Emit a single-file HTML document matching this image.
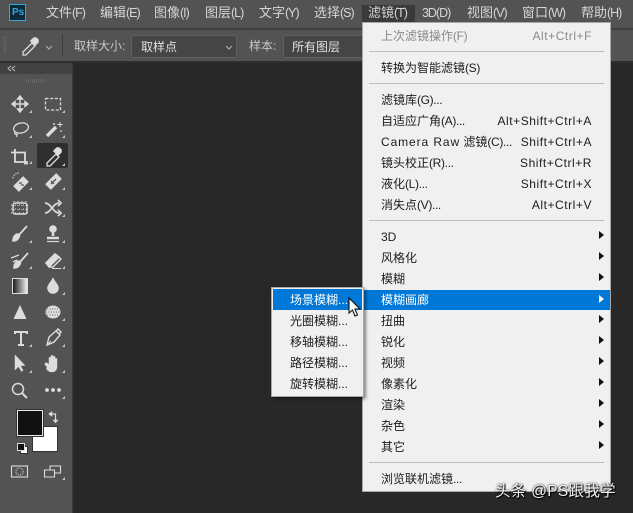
<!DOCTYPE html>
<html><head><meta charset="utf-8"><style>
html,body{margin:0;padding:0;width:633px;height:513px;overflow:hidden;background:#282828}
body{position:relative;font-family:"Liberation Sans","Noto Sans CJK SC",sans-serif;}
div,span{position:absolute;box-sizing:border-box}
u{text-decoration:none;letter-spacing:-.35px}
.m u{letter-spacing:-1px;font-size:.96em}
.sub u{letter-spacing:0}
.t{white-space:nowrap;line-height:16px;height:16px}
.m{color:#d6d6d6;font-size:13px;top:5px}
.i{color:#1c1c1c;font-size:12px;left:381px}
.s{color:#1c1c1c;font-size:12px;right:41px;letter-spacing:.55px}
.sub{color:#1c1c1c;font-size:12px;left:290px}
.sep{left:369px;width:235px;height:1px;background:#bdbdbd}
.arr{left:599px;width:0;height:0;border-left:5px solid #111;border-top:4.5px solid transparent;border-bottom:4.5px solid transparent}
svg{position:absolute;left:0;top:0}
</style></head><body>
<div style="left:0;top:0;width:633px;height:28px;background:#535353"></div>
<div style="left:0;top:28px;width:633px;height:2px;background:#3f3f3f"></div>
<div style="left:0;top:30px;width:633px;height:32px;background:#535353"></div>
<div style="left:0;top:61px;width:633px;height:2px;background:#2e2e2e"></div>
<div style="left:0;top:63px;width:72px;height:450px;background:#535353"></div>
<div style="left:0;top:63px;width:72px;height:11px;background:#424242"></div>
<div style="left:72px;top:63px;width:1px;height:450px;background:#3a3a3a"></div>
<div style="left:9px;top:4px;width:17px;height:17px;background:#0d2a3c;border:1.5px solid #31a8d8"></div>
<div class="t" style="left:12px;top:5px;font-size:10px;font-weight:bold;color:#31a8d8">Ps</div>
<div class="t m" style="left:46px">文件<u>(F)</u></div>
<div class="t m" style="left:100px">编辑<u>(E)</u></div>
<div class="t m" style="left:154px">图像<u>(I)</u></div>
<div class="t m" style="left:205px">图层<u>(L)</u></div>
<div class="t m" style="left:259px">文字<u>(Y)</u></div>
<div class="t m" style="left:314px">选择<u>(S)</u></div>
<div style="left:362px;top:5px;width:53px;height:17px;background:#3a3a3a"></div>
<div class="t m" style="left:368px">滤镜<u>(T)</u></div>
<div class="t m" style="left:422px"><u>3D(D)</u></div>
<div class="t m" style="left:467px">视图<u>(V)</u></div>
<div class="t m" style="left:522px">窗口<u>(W)</u></div>
<div class="t m" style="left:581px">帮助<u>(H)</u></div>
<div style="left:62px;top:34px;width:1px;height:22px;background:#3d3d3d"></div>
<div class="t" style="left:74px;top:38px;font-size:12px;color:#c8c8c8">取样大小:</div>
<div style="left:131px;top:35px;width:106px;height:23px;background:#454545;border:1px solid #5f5f5f;border-radius:3px"></div>
<div class="t" style="left:141px;top:39px;font-size:12px;color:#e0e0e0">取样点</div>
<div class="t" style="left:249px;top:38px;font-size:12px;color:#c8c8c8">样本:</div>
<div style="left:283px;top:35px;width:85px;height:23px;background:#454545;border:1px solid #5f5f5f;border-radius:3px"></div>
<div class="t" style="left:292px;top:39px;font-size:12px;color:#e0e0e0">所有图层</div>
<div style="left:37px;top:143px;width:31px;height:25px;background:#2f2f2f;border-radius:2px"></div>
<svg width="633" height="513" fill="none" stroke="#dcdcdc" stroke-width="1.6">
<!-- grips & option bar -->
<path d="M4 36v18M6 36v18" stroke="#666" stroke-dasharray="1 1"/>
<path d="M26 80h20M26 82h20" stroke="#6d6d6d" stroke-dasharray="1 1"/>
<path d="M11 66l-3 2.500 3 2.500M15 66l-3 2.500 3 2.500" stroke="#bbb" stroke-width="1"/>
<path d="M46 45l3 3 3-3M226 45l3 3 3-3" stroke="#aaa" stroke-width="1.2" transform="translate(0,1)"/>
<!-- options eyedropper -->
<path d="M23 52l9-9 3 3-9 9h-3z" stroke="#ddd" stroke-width="1.300"/><path d="M31 41l3-3 2 0 2 2 0 2-3 3z" fill="#ddd"/>
<!-- move -->
<path d="M20 97v14M13 104h14M20 96l-2.500 3h5zM20 112l-2.500-3h5zM12 104l3-2.500v5zM28 104l-3-2.500v5z" fill="#dcdcdc" stroke-width="1.4"/>
<!-- marquee -->
<rect x="45.500" y="98.500" width="15" height="11.500" stroke-dasharray="3 1.700" stroke-width="1.300"/>
<!-- lasso -->
<ellipse cx="21" cy="128" rx="7.500" ry="5" transform="rotate(-12 21 128)" stroke-width="1.300"/><path d="M15 132c-1 2 1 3 2 2s-1 2 0 3" stroke-width="1.200"/>
<!-- wand -->
<path d="M47 136l9-9" stroke-width="3.400"/><path d="M60 122v5M57.500 124.500h5M54 123v2M53 124h2M61 130v2" stroke-width="1"/>
<!-- crop -->
<path d="M15 149v13h12v2.500M11 152.500h14v12" stroke-width="1.800"/>
<!-- eyedropper -->
<path d="M47 163l9-9 3 3-9 9h-3z" stroke="#e0e0e0" stroke-width="1.300"/><path d="M54 151l3-3h2l2 2v2l-3 3z" fill="#e0e0e0"/>
<!-- heal -->
<path d="M16 189l10-10" stroke-width="8"/><path d="M13 178a6 6 0 0 1 7-5" stroke-dasharray="1.200 1.200" stroke-width="1.200"/><path d="M19 183h3M21 185h3" stroke="#555" stroke-width="1.200"/>
<!-- bandage -->
<path d="M48 187l11-11" stroke-width="8"/><path d="M51 184l5-5M54 184l-3-3" stroke="#555" stroke-width="1.400"/>
<!-- patch -->
<rect x="13" y="203" width="14" height="11" rx="2" stroke-width="1.400"/><path d="M14 201v15M18 201v15M22 201v15M26 201v15M11 205h18M11 209h18M11 213h18" stroke-dasharray="1 3" stroke-width="1"/>
<!-- content move -->
<path d="M45 203c6 0 8 10 14 10M45 213c6 0 8-10 14-10M58 200l3 3-3 3M58 210l3 3-3 3" stroke-width="1.700"/>
<!-- brush -->
<path d="M27 226l-8 9" stroke-width="1.800"/><path d="M13 241c0-4 2-6 4-7 2 0 3 2 2 3-1 3-3 4-6 4z" fill="#dcdcdc"/>
<!-- stamp -->
<circle cx="53" cy="229" r="3" fill="#dcdcdc"/><path d="M53 231v5M47 238h12" stroke-width="2.600"/><path d="M47 241.500h12" stroke-width="1.200"/>
<!-- history brush -->
<path d="M28 253l-8 9" stroke-width="1.800"/><path d="M14 268c0-4 2-6 4-7 2 0 3 2 2 3-1 3-3 4-6 4z" fill="#dcdcdc"/><path d="M11 258l8-3M13 262l4-2" stroke-width="1.400"/>
<!-- eraser -->
<path d="M46 263l9-9 6 5-8 8h-4z" stroke-width="1.400"/><path d="M46 263l9-9 4 3-9 9z" fill="#dcdcdc"/><path d="M52 268.500h9" stroke-width="1"/>
<!-- smudge drop -->
<path d="M53 279c-2 4-5 6-5 9a5 5 0 0 0 10 0c0-3-3-5-5-9z" fill="#dcdcdc"/>
<!-- triangle -->
<path d="M20 305l6.500 14h-13z" fill="#dcdcdc" stroke-width="0"/>
<!-- sponge -->
<ellipse cx="53" cy="312" rx="7.500" ry="6.500" fill="#dcdcdc" stroke="none"/><path d="M47 309h12M46 312h14M47 315h12" stroke="#666" stroke-dasharray="1 1.500" stroke-width="1"/>
<!-- T -->
<path d="M15 334v-2h12v2M21 332v13M18 345h6" stroke-width="2"/>
<!-- pen -->
<path d="M47 345l2-8 7-6 4 4-6 7z" stroke-width="1.400"/><path d="M47 345l4-4" stroke-width="1"/><path d="M56 331l2-2 3 3-2 2" stroke-width="1.500"/>
<!-- arrow -->
<path d="M15 355v15l3.500-3.500 3 5 1.500-1-2.500-5h4.500z" fill="#dcdcdc" stroke-width="0.500"/>
<!-- hand -->
<path d="M47 367c-2-2-3-3-1.500-4s3 1 3.500 1.500V358c0-1 2-1 2 0v4-6c0-1 2-1 2 0v6-5c0-1 2-1 2 0v5-3c0-1 2-1 2 0v7c0 3-1 6-5 6-3 0-5-2-5.500-3z" fill="#dcdcdc" stroke-width="0.500"/>
<!-- zoom -->
<circle cx="18" cy="389" r="5.500" stroke-width="1.500"/><path d="M22 393l5 5" stroke-width="2"/>
<!-- dots -->
<path d="M47 390h.01M53 390h.01M59 390h.01" stroke-width="3.800" stroke-linecap="round"/>
<!-- swap -->
<path d="M50 414h5.500v7" stroke-width="1.200"/><path d="M52 411.500l-3.500 2.500 3.500 2.500zM53 420h5l-2.500 3z" fill="#dcdcdc" stroke-width="0.500"/>
<!-- mask -->
<rect x="11.500" y="466" width="16" height="11" stroke-width="1.100"/><circle cx="19.500" cy="471.500" r="3.600" stroke-width="1" stroke-dasharray="1 1"/>
<!-- screen -->
<path d="M44.500 470h10v7h-10zM50 470v-4h10.500v7H55" stroke-width="1.100"/>
<!-- corner triangles -->
<path d="M32 113v-3l-3 3zM65 113v-3l-3 3zM32 138v-3l-3 3zM65 138v-3l-3 3zM32 164v-3l-3 3zM65 166v-3l-3 3zM32 190v-3l-3 3zM65 190v-3l-3 3zM65 217v-3l-3 3zM32 243v-3l-3 3zM65 243v-3l-3 3zM32 269v-3l-3 3zM65 269v-3l-3 3zM65 295v-3l-3 3zM65 321v-3l-3 3zM32 347v-3l-3 3zM65 347v-3l-3 3zM32 373v-3l-3 3zM65 373v-3l-3 3zM65 399v-3l-3 3zM65 480v-3l-3 3z" fill="#c4c4c4" stroke="none"/>
</svg>
<!-- gradient swatch -->
<div style="left:12px;top:278px;width:16px;height:16px;background:linear-gradient(90deg,#1c1c1c,#eee);border:1px solid #ddd"></div>
<!-- colours -->
<div style="left:32px;top:426px;width:26px;height:26px;background:#fff;border:1px solid #333"></div>
<div style="left:17px;top:410px;width:26px;height:26px;background:#111;border:1px solid #e8e8e8;outline:1px solid #333"></div>
<div style="left:20px;top:446px;width:8px;height:8px;background:#fff;border:1px solid #333"></div>
<div style="left:17px;top:443px;width:8px;height:8px;background:#111;border:1px solid #ddd"></div>
<!-- main menu -->
<div style="left:362px;top:22px;width:249px;height:470px;background:#f0f0f0;border:1px solid #a8a8a8"></div>
<div class="t i" style="top:28px;color:#8a8a8a">上次滤镜操作<u>(F)</u></div>
<div class="t s" style="top:28px;color:#8a8a8a">Alt+Ctrl+F</div>
<div class="sep" style="top:51px"></div>
<div class="t i" style="top:60px">转换为智能滤镜<u>(S)</u></div>
<div class="sep" style="top:83px"></div>
<div class="t i" style="top:92px">滤镜库<u>(G)...</u></div>
<div class="t i" style="top:113px">自适应广角<u>(A)...</u></div>
<div class="t s" style="top:113px">Alt+Shift+Ctrl+A</div>
<div class="t i" style="top:134px"><b style="font-weight:normal;letter-spacing:.9px">Camera Raw</b> 滤镜<u>(C)...</u></div>
<div class="t s" style="top:134px">Shift+Ctrl+A</div>
<div class="t i" style="top:155px">镜头校正<u>(R)...</u></div>
<div class="t s" style="top:155px">Shift+Ctrl+R</div>
<div class="t i" style="top:176px">液化<u>(L)...</u></div>
<div class="t s" style="top:176px">Shift+Ctrl+X</div>
<div class="t i" style="top:197px">消失点<u>(V)...</u></div>
<div class="t s" style="top:197px">Alt+Ctrl+V</div>
<div class="sep" style="top:220px"></div>
<div class="t i" style="top:229px">3D</div><div class="arr" style="top:231px"></div>
<div class="t i" style="top:250px">风格化</div><div class="arr" style="top:252px"></div>
<div class="t i" style="top:271px">模糊</div><div class="arr" style="top:273px"></div>
<div style="left:363px;top:290px;width:247px;height:20px;background:#0078d7"></div>
<div class="t i" style="top:292px;color:#fff">模糊画廊</div><div class="arr" style="top:295px;border-left-color:#fff"></div>
<div class="t i" style="top:313px">扭曲</div><div class="arr" style="top:315px"></div>
<div class="t i" style="top:334px">锐化</div><div class="arr" style="top:336px"></div>
<div class="t i" style="top:355px">视频</div><div class="arr" style="top:357px"></div>
<div class="t i" style="top:376px">像素化</div><div class="arr" style="top:378px"></div>
<div class="t i" style="top:397px">渲染</div><div class="arr" style="top:399px"></div>
<div class="t i" style="top:418px">杂色</div><div class="arr" style="top:420px"></div>
<div class="t i" style="top:439px">其它</div><div class="arr" style="top:441px"></div>
<div class="sep" style="top:462px"></div>
<div class="t i" style="top:471px">浏览联机滤镜<u>...</u></div>
<!-- submenu -->
<div style="left:271px;top:287px;width:93px;height:110px;background:#f0f0f0;border:1px solid #a8a8a8;box-shadow:2px 2px 3px rgba(0,0,0,.45)"></div>
<div style="left:273px;top:289px;width:89px;height:21px;background:#0078d7"></div>
<div class="t sub" style="top:292px;color:#fff">场景模糊<u>...</u></div>
<div class="t sub" style="top:313px">光圈模糊<u>...</u></div>
<div class="t sub" style="top:334px">移轴模糊<u>...</u></div>
<div class="t sub" style="top:355px">路径模糊<u>...</u></div>
<div class="t sub" style="top:376px">旋转模糊<u>...</u></div>
<!-- cursor -->
<svg width="633" height="513"><path d="M349 298v15l3.500-3 2.500 6 2.500-1-2.500-6h5z" fill="#fff" stroke="#111" stroke-width="1.100"/></svg>
<!-- watermark -->
<div class="t" style="left:495px;top:483px;height:18px;line-height:18px;font-size:15.5px;color:#f2f2f2;text-shadow:0 0 2px #000,1px 1px 1px #000;letter-spacing:.3px">头条 @PS跟我学</div>
</body></html>
